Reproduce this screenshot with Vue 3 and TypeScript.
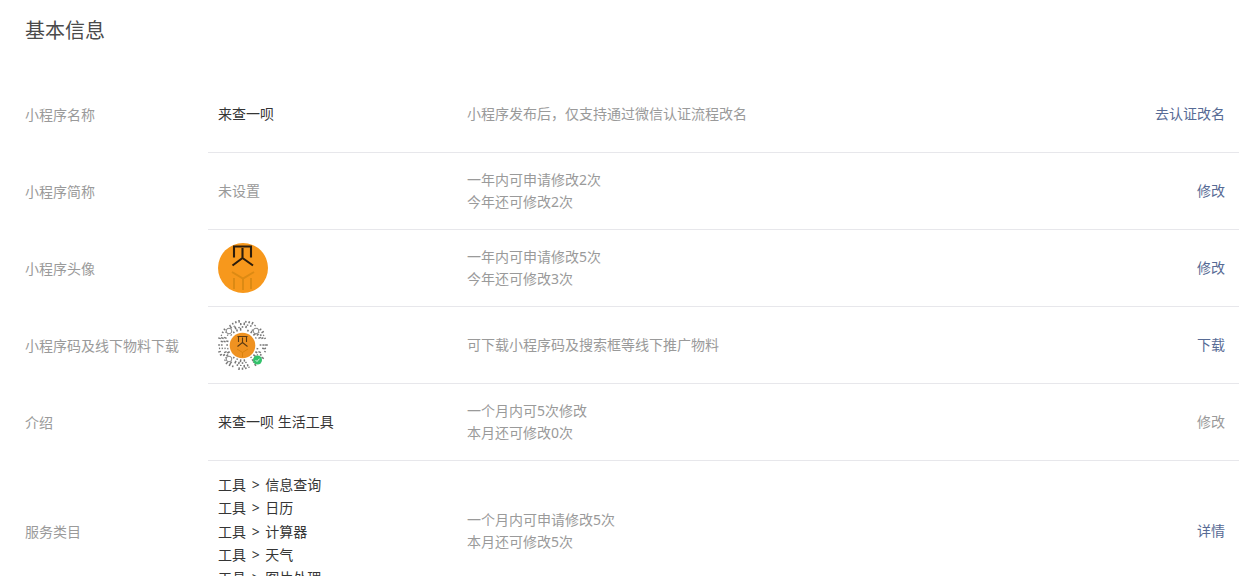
<script setup lang="ts">
interface InfoRow {
  label: string
  value?: string
  values?: string[]
  muted?: boolean
  image?: 'avatar' | 'qrcode'
  tips: string[]
  action: string
  disabled?: boolean
}

const rows: InfoRow[] = [
  { label: '小程序名称', value: '来查一呗', tips: ['小程序发布后，仅支持通过微信认证流程改名'], action: '去认证改名' },
  { label: '小程序简称', value: '未设置', muted: true, tips: ['一年内可申请修改2次', '今年还可修改2次'], action: '修改' },
  { label: '小程序头像', image: 'avatar', tips: ['一年内可申请修改5次', '今年还可修改3次'], action: '修改' },
  { label: '小程序码及线下物料下载', image: 'qrcode', tips: ['可下载小程序码及搜索框等线下推广物料'], action: '下载' },
  { label: '介绍', value: '来查一呗 生活工具', tips: ['一个月内可5次修改', '本月还可修改0次'], action: '修改', disabled: true },
  {
    label: '服务类目',
    values: ['工具 > 信息查询', '工具 > 日历', '工具 > 计算器', '工具 > 天气', '工具 > 图片处理'],
    tips: ['一个月内可申请修改5次', '本月还可修改5次'],
    action: '详情',
  },
]

// 小程序码的放射状点阵
const qrDots: { x: number; y: number; len: number; angle: number }[] = []
for (let ring = 0; ring < 4; ring++) {
  const radius = 14.5 + ring * 2.7
  const count = 26 + ring * 6
  for (let i = 0; i < count; i++) {
    if ((i * 7 + ring * 3) % 5 === 0) continue
    const angle = (i / count) * Math.PI * 2
    qrDots.push({
      x: 24.5 + Math.cos(angle) * radius,
      y: 25 + Math.sin(angle) * radius,
      len: 1.2 + ((i * 13 + ring) % 4) * 0.5,
      angle: (angle * 180) / Math.PI,
    })
  }
}

const qrEyes = [
  { x: 11, y: 11 },
  { x: 38, y: 11 },
  { x: 11, y: 39 },
]
</script>

<template>
  <section class="page">
    <h2 class="title">基本信息</h2>
    <div class="info-list">
      <div v-for="row in rows" :key="row.label" class="info-row">
        <div class="label">{{ row.label }}</div>
        <div class="content">
          <div class="value" :class="{ muted: row.muted, text: row.value }">
            <svg v-if="row.image === 'avatar'" class="pic" viewBox="0 0 50 50">
              <circle cx="25" cy="25" r="25" fill="#f7981c" />
              <g fill="none" stroke="#2b1c0c" stroke-width="2.100">
                <path d="M15 3.500h19M16 3.500v11M33 3.500v11" />
                <path d="M24.500 5v10M24.500 15L14.500 22.500M24.500 15L35 22.500" />
              </g>
              <g fill="none" stroke="#dc8a14" stroke-width="2">
                <path d="M14 29L25 35.500L36 29M25 35.500V47" />
                <path d="M16 35v11M33 35v11" />
              </g>
            </svg>
            <svg v-else-if="row.image === 'qrcode'" class="pic qr" viewBox="0 0 50 50">
              <circle cx="24.500" cy="25" r="24.500" fill="#fff" />
              <g stroke="#777" stroke-width="1.500">
                <line
                  v-for="(dot, i) in qrDots"
                  :key="i"
                  :x1="dot.x"
                  :y1="dot.y"
                  :x2="dot.x + dot.len"
                  :y2="dot.y"
                  :transform="`rotate(${dot.angle} ${dot.x} ${dot.y})`"
                />
              </g>
              <circle
                v-for="eye in qrEyes"
                :key="eye.x + eye.y"
                :cx="eye.x"
                :cy="eye.y"
                r="2.800"
                fill="#fff"
                stroke="#8a8a8a"
                stroke-width="1"
              />
              <circle cx="24.500" cy="25.500" r="12.800" fill="#ef9221" />
              <g fill="none" stroke="#5c3a12" stroke-width="1.100">
                <path d="M19.500 16.500h10M20.500 16.500v5.500M28.500 16.500v5.500M24.500 17.500v5M24.500 22.500l-5 4M24.500 22.500l5 4" />
              </g>
              <path d="M19 29l5.500 3.500 5.500-3.500M24.500 32.500v4.500" fill="none" stroke="#d9830f" stroke-width="1" />
              <circle cx="39.500" cy="40" r="4.500" fill="#33c26b" />
              <path d="M37.500 40l1.500 1.500 2.500-2.800" fill="none" stroke="#fff" stroke-width=".8" />
            </svg>
            <template v-else-if="row.values">
              <p v-for="item in row.values" :key="item" class="value-line">{{ item }}</p>
            </template>
            <template v-else>{{ row.value }}</template>
          </div>
          <div class="tips">
            <p v-for="tip in row.tips" :key="tip">{{ tip }}</p>
          </div>
          <a class="action" :class="{ disabled: row.disabled }">{{ row.action }}</a>
        </div>
      </div>
    </div>
  </section>
</template>

<style scoped>
.page {
  height: 576px;
  overflow: hidden;
  font-family: "Noto Sans", "Noto Sans CJK SC", sans-serif;
  font-size: 14px;
  color: #353535;
  background: #fff;
}

.title {
  margin: 0;
  padding: 16px 25px 0;
  height: 76px;
  box-sizing: border-box;
  font-size: 20px;
  font-weight: 400;
  line-height: 30px;
  color: #4a4a4a;
}

.info-row {
  display: flex;
  align-items: stretch;
}

.label {
  flex: 0 0 183px;
  padding: 0 0 2px 25px;
  display: flex;
  align-items: center;
  color: #9a9a9a;
}

.info-row:last-child .label {
  padding-bottom: 0;
}

.content {
  flex: 1;
  display: flex;
  align-items: center;
  min-height: 76px;
  border-bottom: 1px solid #e7e7eb;
}

.value {
  flex: 0 0 259px;
  box-sizing: border-box;
  padding-left: 10px;
}

.value.text {
  padding-bottom: 2px;
}

.value.muted {
  color: #9a9a9a;
}

.value-line {
  margin: 0;
  line-height: 23.250px;
  word-spacing: 2px;
}

.info-row:last-child .value {
  padding-top: 12px;
  padding-bottom: 11px;
}

.pic {
  display: block;
  width: 50px;
  height: 50px;
}

.qr {
  filter: blur(0.6px);
}

.tips {
  flex: 1;
  color: #9a9a9a;
  line-height: 22px;
}

.tips p {
  margin: 0;
}

.action {
  padding: 0 14px 2px 0;
  color: #576b95;
  cursor: pointer;
}

.action.disabled {
  color: #9a9a9a;
  cursor: default;
}
</style>

<style>
html,
body {
  margin: 0;
  overflow: hidden;
}
</style>
